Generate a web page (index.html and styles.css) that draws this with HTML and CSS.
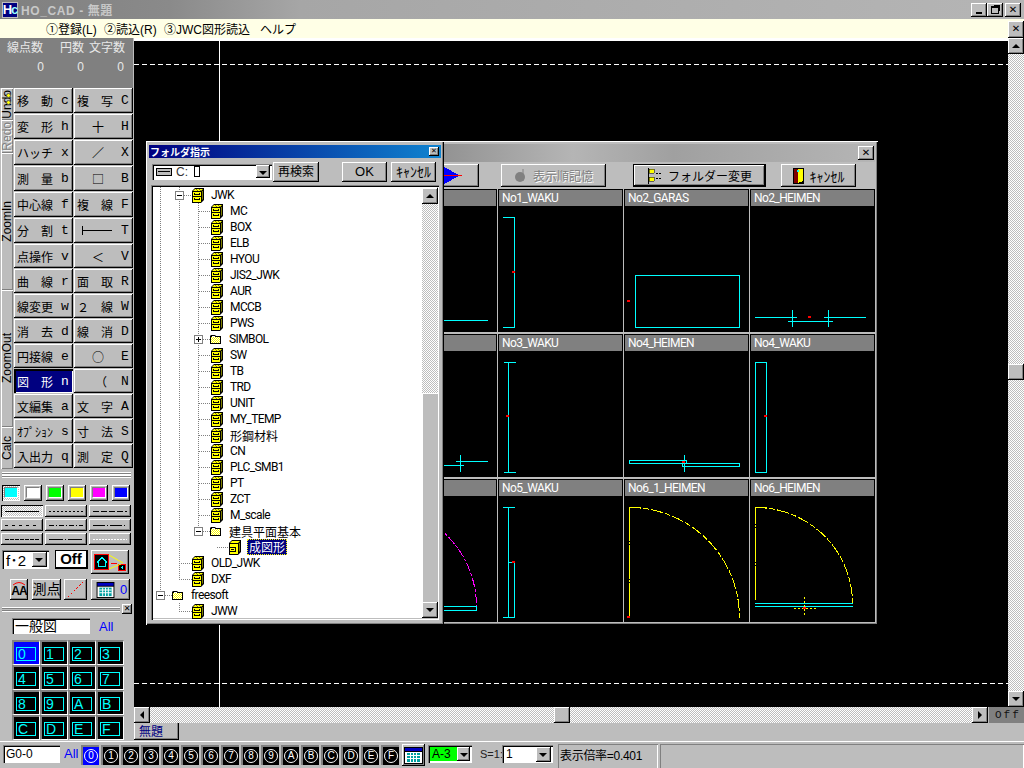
FILE: index.html
```html
<!DOCTYPE html>
<html lang="ja">
<head>
<meta charset="utf-8">
<title>HO_CAD - 無題</title>
<link rel="stylesheet" href="styles.css">
</head>
<body>
<svg class="defs" width="0" height="0">
  <defs>
    <pattern id="dith" width="2" height="2" patternUnits="userSpaceOnUse"><path d="M0 0h2v2H0z" fill="#ffffff"/><path d="M0 0h1v1H0zM1 1h1v1H1z" fill="#ffff00"/></pattern>
  </defs>
  <symbol id="cab" viewBox="0 0 12 15">
    <path d="M3 0h9v12l-3 3H0V3z" fill="#000"/>
    <path d="M3 1h8l-2 2H1z" fill="#ff0"/>
    <path d="M4 1h1v1H4zM7 1h1v1H7zM5 2h1v1H5zM8 2h1v1H8z" fill="#808000"/>
    <path d="M10 3h1v8l-1 1z" fill="#808000"/>
    <path d="M1 4h8v10H1z" fill="#ff0"/>
    <path d="M1 8h8v1H1zM3 6h4v1H3zM3 11h4v1H3z" fill="#000"/>
    <path d="M2 5h1v2H2zM7 5h1v2H7zM2 10h1v2H2zM7 10h1v2H7z" fill="#000"/>
  </symbol>
  <symbol id="cabopen" viewBox="0 0 12 15">
    <path d="M3 0h9v12l-3 3H0V3z" fill="#000"/>
    <path d="M3 1h8l-2 2H1z" fill="#ff0"/>
    <path d="M10 3h1v8l-1 1z" fill="#808000"/>
    <path d="M1 4h8v10H1z" fill="#ff0"/>
    <path d="M0 7h7v5H0z" fill="#000"/>
    <path d="M1 8h5v3H1z" fill="#ff0"/>
    <path d="M2 9h3v1H2z" fill="#000"/>
  </symbol>
  <symbol id="folder" viewBox="0 0 11 10">
    <path d="M1 1h4l1 1h5v8H0V2z" fill="#000"/>
    <path d="M1 3h9v6H1z" fill="url(#dith)"/>
    <path d="M2 2h3v1H2z" fill="#ffffff"/>
  </symbol>
  <symbol id="cal" viewBox="0 0 19 17">
    <path d="M0 0h19v17H0z" fill="#000"/>
    <path d="M1 1h17v3H1z" fill="#0000c0"/>
    <path d="M1 5h17v11H1z" fill="#fff"/>
    <path d="M3 6h13v9H3z" fill="#00a0a0"/>
    <path d="M3 8h13v1H3zM3 11h13v1H3zM6 6h1v9H6zM9 6h1v9H9zM12 6h1v9h-1z" fill="#fff"/>
  </symbol>
</svg>

<div class="app">
  <header class="titlebar">
    <span class="logo"><b>H</b><i>c</i></span>
    <span class="apptitle">HO_CAD - 無題</span>
    <span class="spacer"></span>
    <span class="wbtn"><i class="min"></i></span>
    <span class="wbtn"><i class="rest"></i></span>
    <span class="wbtn wbtn-last">✕</span>
  </header>
  <nav class="menubar">
    <span class="m1">①登録(L)</span>
    <span class="m2">②読込(R)</span>
    <span class="m3">③JWC図形読込</span>
    <span class="m4">ヘルプ</span>
    <span class="spacer"></span>
    <span class="wbtn menuclose">✕</span>
  </nav>

  <div class="mid">
    <aside class="sidebar">
      <div class="info">
        <div class="info-labels"><span class="l1">線点数</span><span class="l2">円数</span><span class="l3">文字数</span></div>
        <div class="info-vals"><span>0</span><span>0</span><span>0</span></div>
      </div>
      <div class="tools">
        <div class="vtabs">
          <div class="vtab vt-undo"><span>Undo</span><i class="dot d1"></i><i class="dot d2"></i></div>
          <div class="vtab vt-redo"><span class="off">Redo</span></div>
          <div class="vtab vt-zin"><span>ZoomIn</span></div>
          <div class="vtab vt-zout"><span>ZoomOut</span></div>
          <div class="vtab vt-calc"><span>Calc</span></div>
        </div>
        <div class="toolgrid">
          <div class="btn"><span>移　動</span><em>c</em></div><div class="btn"><span>複　写</span><em>C</em></div>
          <div class="btn"><span>変　形</span><em>h</em></div><div class="btn"><span class="sym">十</span><em>H</em></div>
          <div class="btn"><span>ハッチ</span><em>x</em></div><div class="btn"><span class="sym">／</span><em>X</em></div>
          <div class="btn"><span>測　量</span><em>b</em></div><div class="btn"><span class="sym">□</span><em>B</em></div>
          <div class="btn"><span>中心線</span><em>f</em></div><div class="btn"><span>複　線</span><em>F</em></div>
          <div class="btn"><span>分　割</span><em>t</em></div><div class="btn"><i class="tline"></i><em>T</em></div>
          <div class="btn"><span>点操作</span><em>v</em></div><div class="btn"><span class="sym">＜</span><em>V</em></div>
          <div class="btn"><span>曲　線</span><em>r</em></div><div class="btn"><span>面　取</span><em>R</em></div>
          <div class="btn"><span>線変更</span><em>w</em></div><div class="btn"><span>２　線</span><em>W</em></div>
          <div class="btn"><span>消　去</span><em>d</em></div><div class="btn"><span>線　消</span><em>D</em></div>
          <div class="btn"><span>円接線</span><em>e</em></div><div class="btn"><span class="sym">○</span><em>E</em></div>
          <div class="btn on"><span>図　形</span><em>n</em></div><div class="btn"><span class="sym sym2">（</span><em>N</em></div>
          <div class="btn"><span>文編集</span><em>a</em></div><div class="btn"><span>文　字</span><em>A</em></div>
          <div class="btn"><span>ｵﾌﾟｼｮﾝ</span><em>s</em></div><div class="btn"><span>寸　法</span><em>S</em></div>
          <div class="btn"><span>入出力</span><em>q</em></div><div class="btn"><span>測　定</span><em>Q</em></div>
        </div>
      </div>
      <div class="groove g1"></div>
      <div class="groove g1b"></div>
      <div class="swatches">
        <span class="sw sel"><i class="c-cyan"></i></span>
        <span class="sw"><i class="c-white"></i></span>
        <span class="sw"><i class="c-green"></i></span>
        <span class="sw"><i class="c-yellow"></i></span>
        <span class="sw"><i class="c-mag"></i></span>
        <span class="sw"><i class="c-blue"></i></span>
      </div>
      <div class="lines">
        <span class="ln sel"><i class="solid"></i></span>
        <span class="ln"><i class="dotted"></i></span>
        <span class="ln"><i class="dash-l"></i></span>
        <span class="ln"><i class="dash-m"></i></span>
        <span class="ln"><i class="dashdot"></i></span>
        <span class="ln"><i class="longdot"></i></span>
        <span class="ln"><i class="dash-s"></i></span>
        <span class="ln"><i class="longdash"></i></span>
        <span class="ln"><i class="white"></i></span>
      </div>
      <div class="row-a">
        <div class="combo c-f"><span class="ctext">f･2</span><i class="ddbtn"></i></div>
        <div class="offbtn">Off</div>
        <div class="rb housebtn">
          <svg width="32" height="17" viewBox="0 0 32 17" shape-rendering="crispEdges">
            <path d="M0 0h15v16H0z" fill="#000"/>
            <path d="M0 0h15v1H0zM0 15h15v1H0zM0 0h1v16H0zM14 0h1v16h-1z" fill="#f00"/>
            <path d="M7 3h1v1h1v1h1v1h1v1h1v1h-1v4H4V8H3V7h1V6h1V5h1V4h1z" fill="none" stroke="#0ff"/>
            <path d="M17 9h6v1h-6z" fill="#f00"/>
            <path d="M24 10h8v7h-8z" fill="#000"/>
            <path d="M24 10h8v1h-8zM24 16h8v1h-8zM24 10h1v7h-1zM31 10h1v7h-1z" fill="#f00"/>
            <path d="M26 14l3-3v4z" fill="#0ff"/>
            <path d="M15 1l14 8M15 15l12-5" stroke="#ff0" fill="none" shape-rendering="auto"/>
          </svg>
        </div>
      </div>
      <div class="row-b">
        <div class="rb aabtn">
          <svg class="aaarc" width="14" height="5" viewBox="0 0 14 5"><path d="M1 4q6-5 12 0" fill="none" stroke="#f00"/></svg>
          <span class="aatext">AA</span>
        </div>
        <div class="rb sokuten">測点</div>
        <div class="rb diag">
          <svg width="15" height="15" viewBox="0 0 15 15" shape-rendering="crispEdges"><path d="M0 15L15 0" stroke="#f00" stroke-dasharray="2 2" fill="none"/></svg>
        </div>
        <div class="rb calbtn">
          <svg width="19" height="16"><use href="#cal"/></svg>
          <span class="blue">0</span>
        </div>
      </div>
      <div class="closebar">
        <div class="groove g2"></div>
        <span class="wbtn barx">✕</span>
      </div>
      <div class="field-row">
        <div class="field f-kind">一般図</div>
        <span class="blue all">All</span>
      </div>
      <div class="layers">
        <div class="lay cur"><span>0</span></div><div class="lay"><span>1</span></div><div class="lay"><span>2</span></div><div class="lay"><span>3</span></div>
        <div class="lay"><span>4</span></div><div class="lay"><span>5</span></div><div class="lay"><span>6</span></div><div class="lay"><span>7</span></div>
        <div class="lay"><span>8</span></div><div class="lay"><span>9</span></div><div class="lay"><span>A</span></div><div class="lay"><span>B</span></div>
        <div class="lay"><span>C</span></div><div class="lay"><span>D</span></div><div class="lay"><span>E</span></div><div class="lay"><span>F</span></div>
      </div>
    </aside>

    <div class="work">
      <div class="work-top">
        <main class="canvas">
          <i class="hdash hd1"></i>
          <i class="hdash hd2"></i>
          <i class="vline"></i>
        </main>
        <div class="vscroll">
          <span class="sbtn"><i class="ar up"></i></span>
          <span class="track"></span>
          <span class="sbtn vthumb"></span>
          <span class="track"></span>
          <span class="sbtn"><i class="ar down"></i></span>
        </div>
      </div>
      <div class="hscroll">
        <span class="sbtn"><i class="ar left"></i></span>
        <span class="track t1"></span>
        <span class="sbtn"></span>
        <span class="track t2"></span>
        <span class="sbtn"><i class="ar right"></i></span>
        <span class="offpanel">Off</span>
      </div>
      <div class="tabs"><span class="tab">無題</span></div>
    </div>
  </div>

  <footer class="status">
    <div class="field f-group">G0-0</div>
    <span class="blue all2">All</span>
    <div class="groups">
      <span class="grp cur"><b>0</b></span><span class="grp"><b>1</b></span><span class="grp"><b>2</b></span><span class="grp"><b>3</b></span>
      <span class="grp"><b>4</b></span><span class="grp"><b>5</b></span><span class="grp"><b>6</b></span><span class="grp"><b>7</b></span>
      <span class="grp"><b>8</b></span><span class="grp"><b>9</b></span><span class="grp"><b>A</b></span><span class="grp"><b>B</b></span>
      <span class="grp"><b>C</b></span><span class="grp"><b>D</b></span><span class="grp"><b>E</b></span><span class="grp"><b>F</b></span>
    </div>
    <div class="rb calbtn2"><svg width="19" height="17"><use href="#cal"/></svg></div>
    <div class="combo c-size"><span class="green">A-3</span><i class="ddbtn"></i></div>
    <span class="scale">S=1:</span>
    <div class="combo c-scale"><span class="ctext">1</span><i class="ddbtn"></i></div>
    <div class="panel p1">表示倍率=0.401</div>
    <div class="panel p2"></div>
  </footer>
</div>

<section class="imgwin">
  <div class="imgtitle"><span class="spacer"></span><span class="wbtn">✕</span></div>
  <div class="imgbar">
    <div class="rb b-arrow">
      <svg width="30" height="17" viewBox="0 0 30 17" shape-rendering="crispEdges"><path d="M7 0L22 8v1L7 17z" fill="#00f"/><path d="M4 8h21v1H4z" fill="#f00"/></svg>
    </div>
    <div class="rb b-order"><svg width="13" height="16" viewBox="0 0 13 16"><circle cx="6" cy="9" r="5" fill="#808080"/><path d="M9 1v12" stroke="#808080"/></svg><span>表示順記憶</span></div>
    <div class="rb b-folder">
      <svg width="15" height="16" viewBox="0 0 15 16" shape-rendering="crispEdges"><path d="M1 0h1v16H1z" fill="#000"/><path d="M2 1h5v4H2zM2 9h5v4H2z" fill="#ff0" stroke="#000" stroke-width=".5"/><path d="M9 5h2v1H9zM12 5h2v1h-2zM9 10h2v1H9zM12 10h2v1h-2z" fill="#000"/></svg>
      <span>フォルダー変更</span>
    </div>
    <div class="rb b-cancel">
      <svg width="11" height="16" viewBox="0 0 11 16" shape-rendering="crispEdges"><path d="M0 0h11v16H0z" fill="#000"/><path d="M1 1h4v14H1z" fill="#800000"/><path d="M5 1h5v12l-5 2z" fill="#ff0"/><path d="M4 2h2v2H4z" fill="#0ff"/></svg>
      <span class="hk">ｷｬﾝｾﾙ</span>
    </div>
  </div>
  <div class="thumbs">
    <article class="cell">
      <h3></h3>
      <svg class="draw" viewBox="0 0 125 126"><path class="cy" d="M60 114.5H116"/></svg>
    </article>
    <article class="cell">
      <h3>No1_WAKU</h3>
      <svg class="draw" viewBox="0 0 125 126"><path class="cy" d="M5 11.5H16.500V121.500H5"/><rect class="rd" x="14" y="65" width="3" height="2"/></svg>
    </article>
    <article class="cell">
      <h3>No2_GARAS</h3>
      <svg class="draw" viewBox="0 0 125 126"><rect class="cy" x="11.500" y="69.500" width="104" height="52"/><rect class="rd" x="3" y="94" width="3" height="2"/></svg>
    </article>
    <article class="cell">
      <h3>No2_HEIMEN</h3>
      <svg class="draw" viewBox="0 0 125 126"><path class="cy" d="M5 111.500H47M74 111.500H116M38 115.500H83M42.500 104V121M78.500 104V121"/><rect class="rd" x="58" y="110" width="3" height="2"/></svg>
    </article>

    <article class="cell">
      <h3></h3>
      <svg class="draw" viewBox="0 0 125 126"><path class="cy" d="M60 114.500H92M84 110.500H116M88.500 104V121"/></svg>
    </article>
    <article class="cell">
      <h3>No3_WAKU</h3>
      <svg class="draw" viewBox="0 0 125 126"><path class="cy" d="M10.500 11V121M6 11.500H18M6 121.500H18"/><rect class="rd" x="8" y="64" width="3" height="2"/></svg>
    </article>
    <article class="cell">
      <h3>No4_HEIMEN</h3>
      <svg class="draw" viewBox="0 0 125 126"><rect class="cy" x="5.500" y="109.500" width="57" height="3"/><rect class="cy" x="58.500" y="112.500" width="57" height="3"/><path class="cy" d="M60.500 104V121"/><rect class="rd" x="58" y="110" width="3" height="2"/></svg>
    </article>
    <article class="cell">
      <h3>No4_WAKU</h3>
      <svg class="draw" viewBox="0 0 125 126"><rect class="cy" x="5.500" y="11.500" width="11" height="110"/><rect class="rd" x="14" y="64" width="3" height="2"/></svg>
    </article>

    <article class="cell">
      <h3></h3>
      <svg class="draw" viewBox="0 0 125 126"><path class="mg" d="M4.500 10.500A100 100 0 0 1 104.500 110.500V114"/><path class="cy" d="M60 110.500H104.500V114.500H60"/></svg>
    </article>
    <article class="cell">
      <h3>No5_WAKU</h3>
      <svg class="draw" viewBox="0 0 125 126"><path class="cy" d="M10.500 11V121M5 11.500H17M5 121.500H17M10 66.500H16.500V121"/><rect class="rd" x="14" y="65" width="3" height="2"/></svg>
    </article>
    <article class="cell">
      <h3>No6_1_HEIMEN</h3>
      <svg class="draw" viewBox="0 0 125 126"><path class="ye yv" d="M5.500 121V11.500H17"/><path class="ye ya" d="M5.500 11.500A110 110 0 0 1 115.500 121.500"/><rect class="rd" x="3" y="120" width="3" height="2"/></svg>
    </article>
    <article class="cell">
      <h3>No6_HEIMEN</h3>
      <svg class="draw" viewBox="0 0 125 126"><path class="ye yv" d="M5.500 104V11.500H17"/><path class="ye ya" d="M5.500 11.500A97 96 0 0 1 102.500 107.500"/><path class="cy" d="M5 107.500H103M5 110.500H103"/><path class="ye yd" d="M44 112.500H68M54.500 101V121"/><rect class="rd" x="53" y="111" width="3" height="2"/></svg>
    </article>
  </div>
</section>

<section class="dialog">
  <div class="dtitle"><span>フォルダ指示</span><span class="spacer"></span><span class="wbtn dx">✕</span></div>
  <div class="dbar">
    <div class="combo c-drive">
      <svg width="16" height="8" viewBox="0 0 16 8" shape-rendering="crispEdges"><path d="M0 0h16v8H0z" fill="#000"/><path d="M1 1h14v6H1z" fill="#bdbdbd"/><path d="M2 3h12v1H2z" fill="#000"/></svg>
      <span class="cdr">C:</span><i class="tofu"></i>
      <span class="spacer"></span><i class="ddbtn"></i>
    </div>
    <div class="rb d-search">再検索</div>
    <span class="spacer"></span>
    <div class="rb d-ok">OK</div>
    <div class="rb d-cancel">ｷｬﾝｾﾙ</div>
  </div>
  <div class="treebox">
    <div class="tree">
      <i class="tv tv1"></i><i class="tv tv2"></i><i class="tv tv3"></i><i class="tv tv4"></i>
      <div class="node n1"><i class="exp minus"></i><i class="dash w8"></i><svg class="cab"><use href="#cab"/></svg><span>JWK</span></div>
      <div class="node n2"><i class="dash w12"></i><svg class="cab"><use href="#cab"/></svg><span>MC</span></div>
      <div class="node n2"><i class="dash w12"></i><svg class="cab"><use href="#cab"/></svg><span>BOX</span></div>
      <div class="node n2"><i class="dash w12"></i><svg class="cab"><use href="#cab"/></svg><span>ELB</span></div>
      <div class="node n2"><i class="dash w12"></i><svg class="cab"><use href="#cab"/></svg><span>HYOU</span></div>
      <div class="node n2"><i class="dash w12"></i><svg class="cab"><use href="#cab"/></svg><span>JIS2_JWK</span></div>
      <div class="node n2"><i class="dash w12"></i><svg class="cab"><use href="#cab"/></svg><span>AUR</span></div>
      <div class="node n2"><i class="dash w12"></i><svg class="cab"><use href="#cab"/></svg><span>MCCB</span></div>
      <div class="node n2"><i class="dash w12"></i><svg class="cab"><use href="#cab"/></svg><span>PWS</span></div>
      <div class="node n2f"><i class="exp plus"></i><i class="dash w7"></i><svg class="fold"><use href="#folder"/></svg><span>SIMBOL</span></div>
      <div class="node n2"><i class="dash w12"></i><svg class="cab"><use href="#cab"/></svg><span>SW</span></div>
      <div class="node n2"><i class="dash w12"></i><svg class="cab"><use href="#cab"/></svg><span>TB</span></div>
      <div class="node n2"><i class="dash w12"></i><svg class="cab"><use href="#cab"/></svg><span>TRD</span></div>
      <div class="node n2"><i class="dash w12"></i><svg class="cab"><use href="#cab"/></svg><span>UNIT</span></div>
      <div class="node n2"><i class="dash w12"></i><svg class="cab"><use href="#cab"/></svg><span>MY_TEMP</span></div>
      <div class="node n2"><i class="dash w12"></i><svg class="cab"><use href="#cab"/></svg><span class="jp">形鋼材料</span></div>
      <div class="node n2"><i class="dash w12"></i><svg class="cab"><use href="#cab"/></svg><span>CN</span></div>
      <div class="node n2"><i class="dash w12"></i><svg class="cab"><use href="#cab"/></svg><span>PLC_SMB1</span></div>
      <div class="node n2"><i class="dash w12"></i><svg class="cab"><use href="#cab"/></svg><span>PT</span></div>
      <div class="node n2"><i class="dash w12"></i><svg class="cab"><use href="#cab"/></svg><span>ZCT</span></div>
      <div class="node n2"><i class="dash w12"></i><svg class="cab"><use href="#cab"/></svg><span>M_scale</span></div>
      <div class="node n2f"><i class="exp minus"></i><i class="dash w7"></i><svg class="fold"><use href="#folder"/></svg><span class="jp">建具平面基本</span></div>
      <div class="node n3"><i class="dash w12"></i><svg class="cab"><use href="#cabopen"/></svg><span class="jp picked">成図形</span></div>
      <div class="node n1c"><i class="dash w13"></i><svg class="cab"><use href="#cab"/></svg><span>OLD_JWK</span></div>
      <div class="node n1c"><i class="dash w13"></i><svg class="cab"><use href="#cab"/></svg><span>DXF</span></div>
      <div class="node n0"><i class="exp minus"></i><i class="dash w7"></i><svg class="fold"><use href="#folder"/></svg><span>freesoft</span></div>
      <div class="node n1c"><i class="dash w13"></i><svg class="cab"><use href="#cab"/></svg><span>JWW</span></div>
    </div>
    <div class="treescroll">
      <span class="sbtn"><i class="ar up"></i></span>
      <span class="track tt"></span>
      <span class="tthumb"></span>
      <span class="sbtn"><i class="ar down"></i></span>
    </div>
  </div>
</section>
</body>
</html>
```
FILE: styles.css
```css
* { box-sizing: border-box; }
html, body { margin: 0; padding: 0; }
body {
  width: 1024px; height: 768px; overflow: hidden; position: relative;
  font: 12px "Liberation Sans", "Noto Sans CJK JP", sans-serif;
  color: #000; background: #bdbdbd;
}
.defs { position: absolute; }
i, em { font-style: normal; display: block; }
.spacer { flex: 1; }
.blue { color: #0000ff; }

/* raised bits */
.rb, .btn, .wbtn, .sbtn, .ln, .tab {
  background: #bdbdbd;
  box-shadow: inset -1px -1px 0 #000, inset 1px 1px 0 #fff, inset -2px -2px 0 #808080;
}

.app { width: 1024px; height: 768px; display: flex; flex-direction: column; }

/* title bar */
.titlebar {
  height: 19px; display: flex; align-items: center; padding: 0 2px;
  background: linear-gradient(90deg, #808080 0, #8a8a8a 170px, #a6a6a6 300px, #b5b5b5 100%);
}
.logo {
  width: 16px; height: 16px; background: #000080; display: flex; align-items: center; justify-content: center;
  font: bold 13px "Liberation Sans", sans-serif; box-shadow: inset 0 0 0 1px #bdbdbd; letter-spacing: -1px;
}
.logo b { color: #fff; }
.logo i { display: inline; color: #9ff; }
.apptitle { margin-left: 3px; color: #c8c8c8; font: bold 12px "Liberation Sans", "Noto Sans CJK JP", sans-serif; letter-spacing: .6px; }
.wbtn {
  width: 16px; height: 14px; display: flex; align-items: center; justify-content: center;
  font: bold 10px "DejaVu Sans", sans-serif; line-height: 1; color: #000; flex: none;
}
.wbtn-last { margin-left: 2px; margin-right: 1px; }
.min { width: 6px; height: 2px; background: #000; margin-top: 7px; margin-left: -1px; }
.rest { width: 8px; height: 8px; border: 1px solid #000; border-top-width: 2px; box-shadow: 2px -2px 0 -1px #000; margin-top: 1px; }

/* menu */
.menubar { height: 19px; background: #ffffe6; display: flex; align-items: center; }
.menubar span { white-space: nowrap; }
.m1 { margin-left: 46px; width: 58px; }
.m2 { width: 60px; }
.m3 { width: 96px; }
.m4 { width: 50px; }
.menuclose { width: 16px; height: 17px; margin-top: 1px; }

.mid { height: 703px; display: flex; }

/* sidebar */
.sidebar { width: 134px; flex: none; height: 703px; background: #bdbdbd; }
.info { height: 50px; background: #808080; color: #e8e8e8; margin-right: 1px; }
.info-labels { height: 17px; position: relative; display: flex; align-items: flex-end; }
.info-labels .l1 { margin-left: 7px; width: 53px; }
.info-labels .l2 { width: 29px; }
.info-labels .l3 { width: 40px; }
.info-vals { display: grid; grid-template-columns: 44px 40px 40px; padding-top: 5px; line-height: 14px; text-align: right; }

.tools { display: flex; height: 381px; }
.vtabs { width: 13px; margin-left: 1px; margin-right: -1px; flex: none; display: flex; flex-direction: column; }
.vtab {
  position: relative; width: 12px; background: #bdbdbd; display: flex; align-items: center; justify-content: center;
  box-shadow: inset 1px 1px 0 #fff, inset -1px -1px 0 #808080;
}
.vtab span { writing-mode: vertical-rl; transform: rotate(180deg); line-height: 12px; white-space: nowrap; }
.vtab .off { color: #808080; text-shadow: -1px 1px 0 #fff; }
.vt-undo { height: 32px; }
.vt-redo { height: 33px; }
.vt-zin { height: 137px; }
.vt-zout { height: 137px; }
.vt-calc { height: 42px; }
.dot { position: absolute; width: 5px; height: 5px; border-radius: 50%; background: #ff0; border: 1px solid #555; left: 5px; }
.d1 { top: 5px; }
.d2 { top: 12px; }

.toolgrid {
  width: 120px; margin-left: 1px; display: grid; grid-template-columns: 59px 59px; column-gap: 1px;
  grid-template-rows: repeat(6, 26px) repeat(9, 25px);
}
.btn {
  display: flex; align-items: center; justify-content: space-between;
  padding: 0 4px 0 3px; margin-bottom: 1px; white-space: nowrap;
  box-shadow: inset -1px -1px 0 #000, inset 1px 1px 0 #fff, inset -2px -2px 0 #808080;
}
.btn em { font-family: "Liberation Mono", monospace; font-size: 13px; width: 8px; text-align: center; }
.btn .sym { margin-left: 15px; font-family: "Noto Sans CJK JP", sans-serif; }
.btn .sym2 { margin-left: 18px; }
.btn.on { background: #000080; color: #fff; box-shadow: inset 1px 1px 0 #000, inset 2px 2px 0 #000, inset -1px -1px 0 #fff; }
.tline { width: 30px; height: 9px; margin-left: 5px; border-left: 1px solid #000; position: relative; }
.tline::after { content: ""; position: absolute; left: 0; right: 0; top: 4px; height: 1px; background: #000; }

.groove { height: 4px; border-top: 1px solid #fff; border-bottom: 1px solid #fff; box-shadow: inset 0 1px 0 #808080, inset 0 -1px 0 #808080; }
.g1 { margin: 3px 3px 0 2px; height: 3px; }
.g1b { margin: 0 3px 0 2px; height: 3px; }

.swatches { display: flex; gap: 4px; margin-top: 7px; padding-left: 2px; }
.sw { width: 18px; height: 16px; padding: 2px; background: #bdbdbd; box-shadow: inset -1px -1px 0 #000, inset 1px 1px 0 #fff, inset -2px -2px 0 #808080; }
.sw i { width: 14px; height: 11px; border: 1px solid #808080; border-right-color: #fff; border-bottom-color: #fff; }
.sw.sel { background: repeating-conic-gradient(#fff 0 25%, #bdbdbd 0 50%) 0 0/2px 2px; box-shadow: inset 1px 1px 0 #000, inset -1px -1px 0 #fff; }
.c-cyan { background: #0ff; } .c-white { background: #fff; } .c-green { background: #0f0; }
.c-yellow { background: #ff0; } .c-mag { background: #f0f; } .c-blue { background: #00f; }

.lines { display: grid; grid-template-columns: repeat(3, 42px); grid-auto-rows: 12px; gap: 2px; margin-top: 4px; padding-left: 1px; }
.ln { display: flex; align-items: center; padding: 0 4px; }
.ln.sel { background: repeating-conic-gradient(#fff 0 25%, #bdbdbd 0 50%) 0 0/2px 2px; box-shadow: inset 1px 1px 0 #000, inset -1px -1px 0 #fff; }
.ln i { width: 100%; height: 1px; }
.ln .solid { background: #000; }
.ln .dotted { background: repeating-linear-gradient(90deg, #000 0 2px, transparent 0 4px); }
.ln .dash-l { background: repeating-linear-gradient(90deg, #000 0 6px, transparent 0 8px); }
.ln .dash-m { background: repeating-linear-gradient(90deg, #000 0 3px, transparent 0 7px); }
.ln .dashdot { background: repeating-linear-gradient(90deg, #000 0 5px, transparent 0 7px, #000 0 8px, transparent 0 10px); }
.ln .longdot { background: repeating-linear-gradient(90deg, #000 0 12px, transparent 0 14px, #000 0 15px, transparent 0 17px); }
.ln .dash-s { background: repeating-linear-gradient(90deg, #000 0 4px, transparent 0 5px); }
.ln .longdash { background: repeating-linear-gradient(90deg, #000 0 14px, transparent 0 16px, #000 0 17px, transparent 0 19px); }
.ln .white { background: repeating-linear-gradient(90deg, #fff 0 2px, transparent 0 3px); }

.row-a { display: flex; align-items: flex-start; margin-top: 5px; padding-left: 2px; height: 24px; }
.combo { display: flex; align-items: center; background: #fff; padding: 2px; box-shadow: inset 1px 1px 0 #808080, inset 2px 2px 0 #000, inset -1px -1px 0 #fff; }
.c-f { width: 47px; height: 19px; font-size: 15px; }
.ctext { flex: 1; padding-left: 2px; font-family: "Liberation Sans", "Noto Sans CJK JP", sans-serif; }
.ddbtn {
  width: 15px; height: 15px; flex: none; position: relative; background: #bdbdbd;
  box-shadow: inset -1px -1px 0 #000, inset 1px 1px 0 #fff, inset -2px -2px 0 #808080;
}
.ddbtn::after { content: ""; position: absolute; left: 3px; top: 6px; border: 4px solid transparent; border-top: 4px solid #000; border-bottom: 0; }
.offbtn {
  width: 33px; height: 19px; margin-left: 6px; background: #fff; border: 1px solid #000; border-width: 1px 2px 2px 1px;
  font: bold 15px/16px "Liberation Sans", sans-serif; text-align: center;
}
.housebtn { width: 38px; height: 24px; margin-left: 3px; display: flex; align-items: center; justify-content: center; }

.row-b { display: flex; align-items: flex-start; height: 21px; margin-top: 5px; }
.aabtn { width: 18px; height: 21px; margin-left: 10px; position: relative; overflow: hidden; text-align: center; }
.aaarc { position: absolute; left: 2px; top: 2px; }
.aatext { position: absolute; left: 0; right: 0; top: 6px; font: bold 12px/13px "Liberation Sans", sans-serif; letter-spacing: -1px; }
.sokuten { width: 29px; height: 21px; margin-left: 4px; font-size: 14px; line-height: 21px; text-align: center; white-space: nowrap; }
.diag { width: 23px; height: 21px; margin-left: 3px; display: flex; align-items: center; justify-content: center; }
.calbtn { width: 39px; height: 21px; margin-left: 4px; display: flex; align-items: center; padding-left: 5px; gap: 5px; font-size: 13px; }

.closebar { display: flex; align-items: center; margin-top: 4px; height: 10px; padding: 0 2px; }
.g2 { flex: 1; height: 5px; }
.barx { width: 10px; height: 10px; margin-left: 2px; font-size: 8px; }

.field { background: #fff; box-shadow: inset 1px 1px 0 #808080, inset 2px 2px 0 #000, inset -1px -1px 0 #fff; font-family: "Liberation Sans", "Noto Sans CJK JP", sans-serif; }
.field-row { display: flex; align-items: center; margin-top: 4px; padding-left: 12px; height: 16px; }
.f-kind { width: 78px; height: 16px; font-size: 14px; line-height: 16px; padding-left: 3px; }
.all { margin-left: 9px; font-size: 13px; }

.layers { display: grid; grid-template-columns: repeat(4, 28px); grid-auto-rows: 25px; margin-top: 6px; margin-left: 12px; }
.lay {
  background: #000; padding: 5px 3px 3px 2px; border: 2px solid #fff; border-top-color: #808080; border-left-color: #808080;
  border-right-width: 1px; border-bottom-width: 1px; color: #0ff;
}
.lay span { display: block; width: 100%; height: 100%; border: 1px solid #0ff; font: 14px/12px "Liberation Sans", sans-serif; padding-left: 1px; }
.lay.cur { background: #0000ff; }

/* workspace */
.work { flex: 1; display: flex; flex-direction: column; min-width: 0; }
.work-top { height: 669px; display: flex; }
.canvas { flex: 1; position: relative; background: #000; border-top: 3px solid #fff; overflow: hidden; }
.hdash { position: absolute; left: 0; right: 0; height: 1px; background: repeating-linear-gradient(90deg, #fff 0 5px, transparent 0 8px); }
.hd1 { top: 23px; }
.hd2 { top: 642px; }
.vline { position: absolute; left: 85px; top: 0; bottom: 0; width: 1px; background: #fff; }
.vscroll { width: 16px; flex: none; display: flex; flex-direction: column; }
.track { flex: 1; background: repeating-conic-gradient(#fff 0 25%, #bdbdbd 0 50%) 0 0/2px 2px; }
.sbtn { width: 16px; height: 16px; flex: none; display: flex; align-items: center; justify-content: center; }
.vscroll .track:nth-child(2) { flex: none; height: 310px; }
.ar { width: 0; height: 0; border: 4px solid transparent; }
.ar.up { border-top: 0; border-bottom: 4px solid #000; }
.ar.down { border-bottom: 0; border-top: 4px solid #000; }
.ar.left { border-left: 0; border-right: 4px solid #000; }
.ar.right { border-right: 0; border-left: 4px solid #000; }
.hscroll { height: 16px; display: flex; }
.t1 { flex: none; width: 404px; }
.offpanel { width: 35px; margin-left: 1px; background: #808080; color: #111; font: 11px/16px "Liberation Mono", monospace; letter-spacing: 2px; padding-left: 6px; }
.tabs { height: 18px; }
.tab { display: block; width: 45px; height: 17px; padding-left: 5px; color: #000080; line-height: 18px; font-size: 12px;
  box-shadow: inset -1px -1px 0 #000, inset 1px 0 0 #fff, inset -2px -2px 0 #808080; }

/* status bar */
.status { height: 27px; display: flex; align-items: flex-start; border-top: 1px solid #fff; padding-top: 3px; padding-left: 3px; }
.f-group { width: 57px; height: 18px; font-size: 12px; line-height: 18px; padding-left: 3px; }
.all2 { width: 17px; margin-left: 4px; font-size: 13px; line-height: 18px; }
.groups { display: flex; gap: 2px; }
.grp { width: 18px; height: 20px; background: #000; color: #fff; border: 2px solid #808080; border-right: 0; border-bottom: 0; display: flex; align-items: center; justify-content: center; }
.grp b { width: 14px; height: 14px; border: 1px solid #fff; border-radius: 50%; font: 10px/12px "Liberation Sans", sans-serif; text-align: center; display: block; }
.grp.cur { background: #00f; }
.calbtn2 { width: 23px; height: 22px; margin-left: 3px; margin-top: -1px; display: flex; align-items: center; justify-content: center; }
.c-size { width: 44px; height: 18px; margin-left: 3px; padding: 2px; }
.green { flex: 1; height: 100%; background: #0f0; padding-left: 2px; line-height: 15px; font-size: 12px; }
.c-size .ddbtn { width: 13px; height: 14px; }
.scale { margin-left: 8px; width: 22px; line-height: 18px; color: #222; font-size: 11px; }
.c-scale { width: 51px; height: 18px; }
.panel { height: 24px; box-shadow: inset 1px 1px 0 #808080, inset -1px 0 0 #fff; margin-top: -1px; font-size: 12px; line-height: 24px; padding-left: 2px; white-space: nowrap; }
.p1 { width: 100px; margin-left: 5px; letter-spacing: -.3px; }
.p2 { width: 364px; margin-left: 2px; }

/* picture window */
.imgwin {
  position: absolute; left: 366px; top: 141px; width: 512px; height: 484px; padding: 3px 3px 0 6px; background: #bdbdbd;
  box-shadow: inset 1px 1px 0 #fff, inset -1px -1px 0 #000, inset -2px -2px 0 #808080;
}
.imgtitle { height: 18px; display: flex; align-items: center; background: linear-gradient(90deg, #808080, #b5b5b5 40%, #a0a0a0 60%, #b5b5b5); padding-right: 1px; }
.imgbar { height: 27px; position: relative; }
.imgbar .rb { position: absolute; top: 2px; height: 23px; display: flex; align-items: center; justify-content: center; gap: 6px; white-space: nowrap; }
.b-arrow { left: 32px; width: 75px; }
.b-arrow svg { margin-left: 21px; }
.b-order { left: 129px; width: 105px; color: #808080; text-shadow: 1px 1px 0 #fff; }
.imgbar .b-folder { left: 261px; width: 133px; box-shadow: inset -2px -2px 0 #000, inset 1px 1px 0 #000, inset 2px 2px 0 #fff, inset -3px -3px 0 #808080; }
.b-cancel { left: 409px; width: 75px; }
.hk { font-size: 14px; }
.thumbs { display: grid; grid-template-columns: repeat(4, 125px); grid-auto-rows: 143px; gap: 2px 1px; }
.cell { background: #000; padding: 1px 0 0; }
.cell h3 { margin: 0 1px; height: 16px; background: #808080; color: #fff; font: 12px/16px Roboto, "Liberation Sans", sans-serif; letter-spacing: -.6px; padding-left: 3px; }
.draw { display: block; width: 125px; height: 126px; }
.cy { fill: none; stroke: #0ff; shape-rendering: crispEdges; }
.mg { fill: none; stroke: #f0f; stroke-dasharray: 9 2 3 2; shape-rendering: crispEdges; }
.ye { fill: none; stroke: #ff0; }
.yv { shape-rendering: crispEdges; stroke-dasharray: 34 1 2 1; }
.ya { shape-rendering: crispEdges; stroke-dasharray: 12 2 6 2; }
.yd { shape-rendering: crispEdges; stroke-dasharray: 2 2; }
.rd { fill: #f00; }

/* folder dialog */
.dialog {
  position: absolute; left: 146px; top: 141px; width: 298px; height: 484px; padding: 4px 3px 0; background: #bdbdbd;
  box-shadow: inset 1px 1px 0 #fff, inset -1px -1px 0 #000, inset -2px -2px 0 #808080;
}
.dtitle { height: 13px; display: flex; align-items: center; background: linear-gradient(90deg, #000080, #1084d0); color: #fff; font: bold 10px "Noto Sans CJK JP", sans-serif; padding: 0 2px 0 1px; }
.dx { width: 10px; height: 9px; font-size: 7px; }
.dbar { height: 27px; display: flex; align-items: center; padding-left: 3px; padding-right: 5px; }
.c-drive { width: 120px; height: 16px; padding-left: 4px; }
.cdr { margin-left: 4px; color: #333; }
.tofu { width: 6px; height: 11px; border: 1px solid #000; margin-left: 6px; }
.c-drive .ddbtn { width: 14px; height: 13px; }
.d-search { width: 46px; height: 20px; margin-left: 1px; text-align: center; line-height: 20px; }
.d-ok { width: 45px; height: 20px; text-align: center; line-height: 20px; font-size: 13px; }
.d-cancel { width: 45px; height: 20px; margin-left: 4px; text-align: center; line-height: 20px; white-space: nowrap; font-size: 14px; }
.treebox {
  width: 288px; height: 435px; margin-left: 2px; background: #fff; display: flex; justify-content: space-between;
  box-shadow: inset 1px 1px 0 #808080, inset 2px 2px 0 #000, inset -1px -1px 0 #fff, inset -2px -2px 0 #bdbdbd;
  padding: 2px 1px 0 2px;
}
.tree { position: relative; width: 269px; }
.node { height: 16px; display: flex; align-items: center; white-space: nowrap; }
.node > span { margin-left: 7px; font: 12px Roboto, "Liberation Sans", sans-serif; letter-spacing: -.6px; }
.node > span.jp { font: 12px "Noto Sans CJK JP", sans-serif; letter-spacing: 0; }
.n0 { padding-left: 3px; }
.n1 { padding-left: 22px; }
.n1c { padding-left: 26px; }
.n2 { padding-left: 46px; }
.n2f { padding-left: 41px; }
.n3 { padding-left: 64px; }
.n0 > span, .n2f > span { margin-left: 8px; }
.exp { width: 9px; height: 9px; border: 1px solid #808080; background: #fff; flex: none; position: relative; }
.exp::before { content: ""; position: absolute; left: 1px; right: 1px; top: 3px; height: 1px; background: #000; }
.exp.plus::after { content: ""; position: absolute; top: 1px; bottom: 1px; left: 3px; width: 1px; background: #000; }
.dash { height: 1px; flex: none; background: repeating-linear-gradient(90deg, #808080 0 1px, transparent 0 2px); }
.w7 { width: 7px; } .w8 { width: 8px; } .w12 { width: 12px; } .w13 { width: 13px; }
.cab { width: 12px; height: 15px; flex: none; }
.fold { width: 11px; height: 10px; flex: none; }
.node > span.picked { background: #000080; color: #fff; outline: 1px dotted #ff0; outline-offset: -1px; padding: 0 2px; height: 16px; line-height: 16px; margin-left: 6px; width: 40px; }
.tv { position: absolute; width: 1px; background: repeating-linear-gradient(180deg, #808080 0 1px, transparent 0 2px); }
.tv1 { left: 7px; top: 0; height: 408px; }
.tv2 { left: 26px; top: 0; height: 392px; }
.tv3 { left: 45px; top: 16px; height: 328px; }
.tv4 { left: 26px; top: 416px; height: 8px; }
.treescroll { width: 16px; flex: none; display: flex; flex-direction: column; margin-top: 1px; height: 430px; }
.tt { flex: none; height: 189px; }
.tthumb { flex: 1; background: #bdbdbd; box-shadow: inset 1px 1px 0 #fff; }
```
